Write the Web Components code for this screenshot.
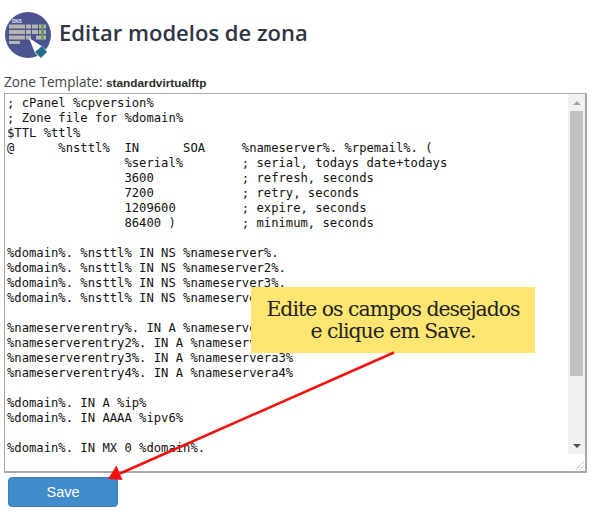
<!DOCTYPE html>
<html lang="pt">
<head>
<meta charset="utf-8">
<title>Editar modelos de zona</title>
<style>
  html, body { margin: 0; background: #fff; }
  body { width: 603px; height: 512px; overflow: hidden; position: relative; }
</style>
</head>
<body>
<page-heading>Editar modelos de zona</page-heading>
<template-label name="standardvirtualftp">Zone Template:</template-label>
<zone-editor>; cPanel %cpversion%
; Zone file for %domain%
$TTL %ttl%
@      %nsttl%  IN      SOA     %nameserver%. %rpemail%. (
                %serial%        ; serial, todays date+todays
                3600            ; refresh, seconds
                7200            ; retry, seconds
                1209600         ; expire, seconds
                86400 )         ; minimum, seconds

%domain%. %nsttl% IN NS %nameserver%.
%domain%. %nsttl% IN NS %nameserver2%.
%domain%. %nsttl% IN NS %nameserver3%.
%domain%. %nsttl% IN NS %nameserver4%.

%nameserverentry%. IN A %nameservera%
%nameserverentry2%. IN A %nameservera2%
%nameserverentry3%. IN A %nameservera3%
%nameserverentry4%. IN A %nameservera4%

%domain%. IN A %ip%
%domain%. IN AAAA %ipv6%

%domain%. IN MX 0 %domain%.</zone-editor>
<save-button>Save</save-button>
<tip-callout>Edite os campos desejados<br>e clique em Save.</tip-callout>
<tip-arrow></tip-arrow>

<script>
"use strict";

(function () {
  class PageHeading extends HTMLElement {
    constructor() {
      super();
      this.attachShadow({ mode: "open" }).innerHTML = `
        <style>
          :host {
            display: flex;
            align-items: center;
            gap: 8px;
            height: 70px;
            padding-left: 5px;
            box-sizing: border-box;
          }
          svg { width: 46px; height: 46px; flex: none; }
          h1 {
            margin: 0;
            font: 600 22px/30px "Open Sans", sans-serif;
            color: #2f3542;
            letter-spacing: 0.02px;
            padding-bottom: 7px;
          }
        </style>
        <svg viewBox="0 0 46 46">
          <circle cx="23" cy="23" r="23" fill="#4a5590"/>
          <text x="7" y="10.5" font-family="Liberation Sans" font-weight="700" font-size="4.6" fill="#e8e8f0">DNS</text>
          <g fill="#b5b5b1">
            <rect x="4" y="12.5" width="16" height="4"/>
            <rect x="4" y="18" width="16" height="4"/>
            <rect x="4" y="23.5" width="16" height="4"/>
            <rect x="4" y="29" width="11" height="3"/>
            <rect x="21" y="12.5" width="5" height="4"/>
            <rect x="27" y="12.5" width="6" height="4"/>
            <rect x="34" y="12.5" width="2.5" height="4"/>
            <rect x="38.5" y="12.5" width="2.5" height="4"/>
            <rect x="21" y="18" width="5" height="4"/>
            <rect x="27" y="18" width="6" height="4"/>
            <rect x="34" y="18" width="2.5" height="4"/>
            <rect x="38.5" y="18" width="2.5" height="4"/>
            <rect x="21" y="23.5" width="5" height="4"/>
            <rect x="31" y="23.5" width="10" height="4"/>
          </g>
          <rect x="36.2" y="12" width="2.4" height="16" fill="#6f9a52"/>
          <path d="M24 26 L38 35 L43 40 L36 47 L30 41 Z" fill="#fff"/>
          <path d="M30 40 L37 34 L42 40 L36 46 Z" fill="#246d8f"/>
        </svg>
        <h1><slot></slot></h1>
      `;
    }
  }

  class TemplateLabel extends HTMLElement {
    constructor() {
      super();
      this.attachShadow({ mode: "open" }).innerHTML = `
        <style>
          :host {
            display: block;
            height: 23px;
            padding: 3px 0 0 4px;
            box-sizing: border-box;
            font: 13.6px/17px "Open Sans", sans-serif;
            color: #444;
          }
          b {
            font: 700 11.8px/17px "Liberation Sans", sans-serif;
            color: #2b2b2b;
          }
        </style>
        <slot></slot> <b></b>
      `;
    }

    connectedCallback() {
      this.shadowRoot.querySelector("b").textContent = this.getAttribute("name");
    }
  }

  class ZoneEditor extends HTMLElement {
    constructor() {
      super();
      this.attachShadow({ mode: "open" }).innerHTML = `
        <style>
          :host {
            display: flex;
            width: 583px;
            height: 380px;
            margin-left: 4px;
            box-sizing: border-box;
            border: 1px solid #a9a9a9;
            border-width: 1px 2px 2px 1px;
            overflow: hidden;
          }
          .text {
            flex: 1;
            min-width: 0;
            margin: 0;
            padding: 2px;
            overflow: hidden;
            font: 12.2px/15px "DejaVu Sans Mono", monospace;
            color: #111;
            white-space: pre;
          }
          .bar {
            flex: none;
            width: 17px;
            display: flex;
            flex-direction: column;
          }
          .track {
            flex: 1;
            background: #f1f1f1;
            display: flex;
            flex-direction: column;
            align-items: center;
          }
          .btn { height: 17px; flex: none; display: flex; align-items: center; justify-content: center; width: 100%; }
          .up { width: 0; height: 0; border: 4px solid transparent; border-top: 0; border-bottom: 4px solid #a3a3a3; }
          .down { width: 0; height: 0; border: 4px solid transparent; border-bottom: 0; border-top: 4px solid #505050; }
          .thumb { flex: none; width: 13px; height: 265px; background: #c1c1c1; }
          .gap { flex: 1; }
          .corner { height: 17px; flex: none; background: #fff; }
          .corner svg { display: block; width: 17px; height: 17px; }
        </style>
        <pre class="text"><slot></slot></pre>
        <div class="bar">
          <div class="track">
            <div class="btn"><i class="up"></i></div>
            <div class="thumb"></div>
            <div class="gap"></div>
            <div class="btn"><i class="down"></i></div>
          </div>
          <div class="corner">
            <svg viewBox="0 0 17 17">
              <path d="M8 15.5 L15.5 8 M12 15.5 L15.5 12" stroke="#777" stroke-width="1" stroke-dasharray="1 1" fill="none"/>
            </svg>
          </div>
        </div>
      `;
    }
  }

  class SaveButton extends HTMLElement {
    constructor() {
      super();
      this.attachShadow({ mode: "open" }).innerHTML = `
        <style>
          :host {
            display: block;
            width: 110px;
            margin: 4px 0 0 8px;
          }
          button {
            display: block;
            width: 100%;
            height: 30px;
            padding: 0;
            border: 1px solid #3a7dbb;
            border-radius: 4px;
            background: #428bca;
            color: #fff;
            font: 14.5px "Liberation Sans", sans-serif;
          }
        </style>
        <button type="button"><slot></slot></button>
      `;
    }
  }

  // lies over the editor
  class TipCallout extends HTMLElement {
    constructor() {
      super();
      this.attachShadow({ mode: "open" }).innerHTML = `
        <style>
          :host {
            position: absolute;
            left: 251px;
            top: 287px;
            width: 284px;
            height: 66px;
            box-sizing: border-box;
            padding-top: 11px;
            background: #ffe672;
            color: #222;
            text-align: center;
            font: 20.4px/22px "DejaVu Serif", serif;
            letter-spacing: -0.98px;
          }
        </style>
        <slot></slot>
      `;
    }
  }

  class TipArrow extends HTMLElement {
    constructor() {
      super();
      this.attachShadow({ mode: "open" }).innerHTML = `
        <style>
          :host { position: absolute; left: 0; top: 0; width: 603px; height: 512px; pointer-events: none; }
          svg { display: block; }
        </style>
        <svg width="603" height="512" viewBox="0 0 603 512">
          <path d="M394 352.5 L120 473.5" stroke="#f5100f" stroke-width="2.6" fill="none"/>
          <path d="M108 479 L116.5 465.5 L122.5 480 Z" fill="#f5100f"/>
        </svg>
      `;
    }
  }

  customElements.define("page-heading", PageHeading);
  customElements.define("template-label", TemplateLabel);
  customElements.define("zone-editor", ZoneEditor);
  customElements.define("save-button", SaveButton);
  customElements.define("tip-callout", TipCallout);
  customElements.define("tip-arrow", TipArrow);
})();
</script>
</body>
</html>
